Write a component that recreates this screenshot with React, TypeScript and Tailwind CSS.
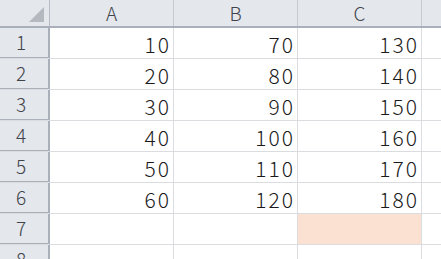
const cols = ['A', 'B', 'C'];
const rows: (number | null)[][] = [
  [10, 70, 130],
  [20, 80, 140],
  [30, 90, 150],
  [40, 100, 160],
  [50, 110, 170],
  [60, 120, 180],
  [null, null, null],
  [null, null, null],
];

const font = { fontFamily: '"Noto Sans CJK JP", "DejaVu Sans", sans-serif' };

export default function App() {
  return (
    <div className="h-[259px] w-[441px] overflow-hidden bg-white font-light" style={font}>
      {/* column headers */}
      <div className="flex h-[28px] border-b-2 border-[#a9b0b9] bg-[#e4e7ec]">
        <div className="relative w-[50px] shrink-0 border-r border-[#b5bcc5]">
          <div className="absolute bottom-[4px] right-[5px] h-0 w-0 border-b-[15px] border-l-[15px] border-b-[#b4b9bf] border-l-transparent" />
        </div>
        {cols.map(c => (
          <div
            key={c}
            className="flex w-[124px] shrink-0 items-center justify-center border-r border-[#c5cad1] text-[19px] text-[#3f444b]"
          >
            {c}
          </div>
        ))}
        <div className="flex-1" />
      </div>

      {rows.map((r, i) => (
        <div key={i} className="flex h-[31px] border-b border-[#dadcdf]">
          <div className="flex w-[50px] shrink-0 items-center justify-center border-r-2 border-[#a9b0b9] border-b bg-[#e4e7ec] pr-[6px] text-[19px] text-[#3f444b]">
            {i + 1}
          </div>
          {r.map((v, j) => (
            <div
              key={j}
              className={
                'flex w-[124px] shrink-0 items-center justify-end border-r border-[#dadcdf] pr-[2px] pt-[3px] text-[21px] tracking-[2px] text-[#1a1a1a] ' +
                (i === 6 && j === 2 ? 'bg-[#fbe1d1]' : '')
              }
            >
              {v}
            </div>
          ))}
          <div className="flex-1" />
        </div>
      ))}
    </div>
  );
}
